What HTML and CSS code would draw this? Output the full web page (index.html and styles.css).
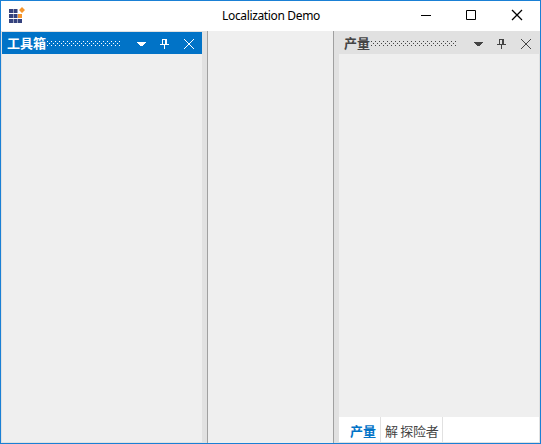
FILE: index.html
```html
<!DOCTYPE html>
<html lang="zh">
<head>
<meta charset="utf-8">
<title>Localization Demo</title>
<link rel="stylesheet" href="styles.css">
</head>
<body>
<div class="window">
  <header class="titlebar">
    <svg class="logo" width="18" height="18" viewBox="0 0 18 18">
      <g fill="#35427d"><path d="M1 2h4v4H1zM5.500 2h4v4h-4zM1 7h4v4H1zM5.500 7h4v4h-4zM1 12h4v4H1zM5.500 12h4v4h-4zM10 12h4v4h-4z"/></g>
      <path fill="#f6962c" d="M10 7h4v4h-4zM14 0l3 3-3 3-3-3z"/>
    </svg>
    <h1 class="title">Localization Demo</h1>
    <div class="controls">
      <svg width="46" height="30" viewBox="0 0 46 30"><path d="M17 15.500h10"/></svg>
      <svg width="46" height="30" viewBox="0 0 46 30"><path d="M16.500 10.500h9v9h-9z"/></svg>
      <svg width="46" height="30" viewBox="0 0 46 30"><path class="cross" d="M16 10l10 10M26 10L16 20"/></svg>
    </div>
  </header>
  <main class="content">
    <section class="panel left">
      <div class="caption active">
        <span class="name">工具箱</span><i class="grip"></i>
        <svg class="tools" width="80" height="22" viewBox="0 0 80 22"><path class="solid" d="M15 10h9v1h-1v1h-1v1h-1v1h-3v-1h-1v-1h-1v-1h-1z"/><path class="solid" fill-rule="evenodd" d="M40 7h5v5h2v1h-4v4h-1v-4h-4v-1h2zM41 8v4h2V8z"/><path class="line" d="M62 7l10 10M72 7l-10 10"/></svg>
      </div>
      <div class="body"></div>
    </section>
    <div class="splitter first"></div>
    <section class="center"></section>
    <div class="splitter second"></div>
    <section class="panel right">
      <div class="caption">
        <span class="name">产量</span><i class="grip"></i>
        <svg class="tools" width="80" height="22" viewBox="0 0 80 22"><path class="solid" d="M15 10h9v1h-1v1h-1v1h-1v1h-3v-1h-1v-1h-1v-1h-1z"/><path class="solid" fill-rule="evenodd" d="M40 7h5v5h2v1h-4v4h-1v-4h-4v-1h2zM41 8v4h2V8z"/><path class="line" d="M62 7l10 10M72 7l-10 10"/></svg>
      </div>
      <div class="body"></div>
      <nav class="tabs"><span class="tab selected">产量</span><span class="tab second-tab">解 探险者</span></nav>
    </section>
  </main>
</div>
</body>
</html>
```

FILE: styles.css
```css
* { box-sizing: border-box; }
body { margin: 0; font: 12px/16px "Noto Sans", "Noto Sans CJK SC", sans-serif; }
.window { width: 541px; height: 444px; border: 1px solid #1a80d5; background: #fff; display: flex; flex-direction: column; overflow: hidden; }
.titlebar { height: 30px; flex: none; display: grid; grid-template-columns: 201px 138px 200px; align-items: start; }
.logo { margin: 6px 0 0 7px; }
.title { margin: 7px 0 0; text-align: center; font: 12px/16px "Noto Sans", sans-serif; letter-spacing: -.35px; color: #000; white-space: nowrap; }
.controls { display: flex; margin-left: 64px; height: 30px; margin-top: -1px; }
.controls svg { flex: none; fill: none; stroke: #000; stroke-width: 1; }
.controls .cross { stroke-width: 1.3; }
.content { flex: 1; display: flex; background: #efefef; }
.panel { display: flex; flex-direction: column; }
.left { width: 201px; border: solid #e1e1e1; border-width: 1px 0 1px 1px; }
.right { width: 201px; border: solid #e1e1e1; border-width: 1px 1px 1px 0; }
.caption { height: 22px; flex: none; display: flex; background: #e1e1e1; color: #444; }
.active { background: #0173c7; color: #fff; }
.name { margin-left: 5px; font: bold 13px/21px "Noto Sans CJK SC", sans-serif; white-space: nowrap; flex: none; width: 40px; }
.right .name { width: 27px; }
.grip { width: 74px; height: 5px; margin-top: 9px; flex: none; background-image: conic-gradient(at 1px 1px, transparent 75%, currentColor 0), conic-gradient(at 1px 1px, transparent 75%, currentColor 0); background-size: 4px 4px; background-position: 0 0, 2px 2px; }
.right .grip { width: 86px; }
.tools { margin-left: auto; flex: none; fill: currentColor; }
.tools .line { fill: none; stroke: currentColor; stroke-width: 1; }
.body { flex: 1; }
.splitter { width: 6px; background: #e1e1e1; }
.first { border-right: 1px solid #a0a0a0; }
.second { border-left: 1px solid #a0a0a0; }
.center { width: 125px; }
.tabs { height: 25px; flex: none; display: flex; background: #fff; color: #444; padding-left: 6px; }
.tab { padding: 2px 4px 0 5px; font: 13px/24px "Noto Sans CJK SC", sans-serif; border-right: 1px solid #e1e1e1; white-space: nowrap; }
.selected { color: #0173c7; font-weight: bold; }
.second-tab { width: 62px; padding-left: 4px; letter-spacing: -.3px; }
```
